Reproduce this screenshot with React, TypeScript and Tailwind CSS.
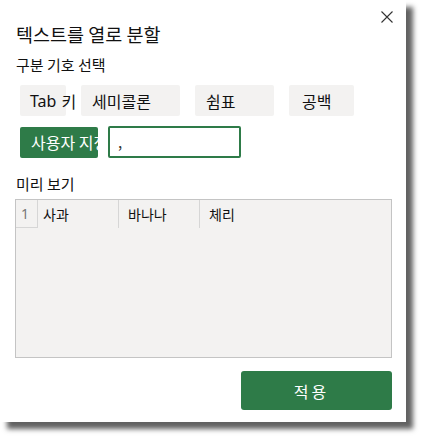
import React from "react";

const font = { fontFamily: '"Noto Sans CJK KR", "Noto Sans", sans-serif' };

function GrayBtn({ label, w, pl = "pl-[11px]" }: { label: string; w: string; pl?: string }) {
  return (
    <div className={`${w} h-[31px] bg-[#f3f2f1] rounded-[2px] flex items-center ${pl} text-[16px] text-[#111] whitespace-nowrap`}>
      {label}
    </div>
  );
}

export default function App() {
  return (
    <div className="w-[422px] h-[438px] bg-white" style={font}>
      <div className="relative w-[406px] h-[422px] bg-white shadow-[7px_7px_5px_rgba(0,0,0,0.62)] flex flex-col pl-[15px] pr-[14px]">
        <button className="absolute top-[11px] left-[381px] w-[12px] h-[12px]">
          <svg width="12" height="12" viewBox="0 0 12 12">
            <path d="M0.5 0.5 L11.5 11.5 M11.5 0.5 L0.5 11.5" stroke="#333" strokeWidth="1.1" />
          </svg>
        </button>
        <div className="mt-[22px] pl-px text-[18.5px] leading-[24px] text-[#111]">텍스트를 열로 분할</div>
        <div className="mt-[9px] pl-px text-[15px] leading-[20px] text-[#111]">구분 기호 선택</div>
        <div className="mt-[10px] pl-[5px] flex gap-[15px]">
          <div className="w-[46px] h-[31px] bg-[#f3f2f1] rounded-[2px] flex items-center pl-[10px] text-[16px] text-[#111] whitespace-nowrap overflow-visible">
            <span style={{ fontFamily: '"Noto Sans", sans-serif' }} className="text-[#111]">Tab</span>
            <span className="ml-[5px]">키</span>
          </div>
          <GrayBtn label="세미콜론" w="w-[99px]" />
          <GrayBtn label="쉼표" w="w-[79px]" />
          <GrayBtn label="공백" w="w-[65px]" pl="pl-[13px]" />
        </div>
        <div className="mt-[10px] pl-[5px] flex items-center gap-[10px]">
          <div className="w-[78px] h-[31px] bg-[#2e7b48] rounded-[2px] flex items-center pl-[11px] text-[16px] text-white whitespace-nowrap overflow-hidden">
            사용자 지정
          </div>
          <div className="w-[133px] h-[32px] border-2 border-[#2e7b48] rounded-[2px] flex items-center pl-[8px] text-[15px] text-[#333]">
            ,
          </div>
        </div>
        <div className="mt-[16px] pl-px text-[15px] leading-[20px] text-[#111]">미리 보기</div>
        <div className="mt-[5px] w-[377px] h-[159px] border border-[#c4c4c4] bg-[#f3f2f1] flex flex-col">
          <div className="flex h-[28px] text-[14px] text-[#111]">
            <div className="w-[22px] h-[28px] border-r border-b border-[#d6d6d6] flex items-center pl-[5px] text-[#777]" style={{ fontFamily: '"Noto Sans", sans-serif' }}>1</div>
            <div className="w-[81px] border-r border-[#d6d6d6] flex items-center pl-[5px]">사과</div>
            <div className="w-[81px] border-r border-[#d6d6d6] flex items-center pl-[9px]">바나나</div>
            <div className="flex-1 flex items-center pl-[9px]">체리</div>
          </div>
        </div>
        <div className="mt-[13px] flex justify-end">
          <button className="w-[151px] h-[39px] bg-[#2e7b48] rounded-[3px] text-white text-[16px] tracking-[3px] pr-[10px]">
            적용
          </button>
        </div>
      </div>
    </div>
  );
}
